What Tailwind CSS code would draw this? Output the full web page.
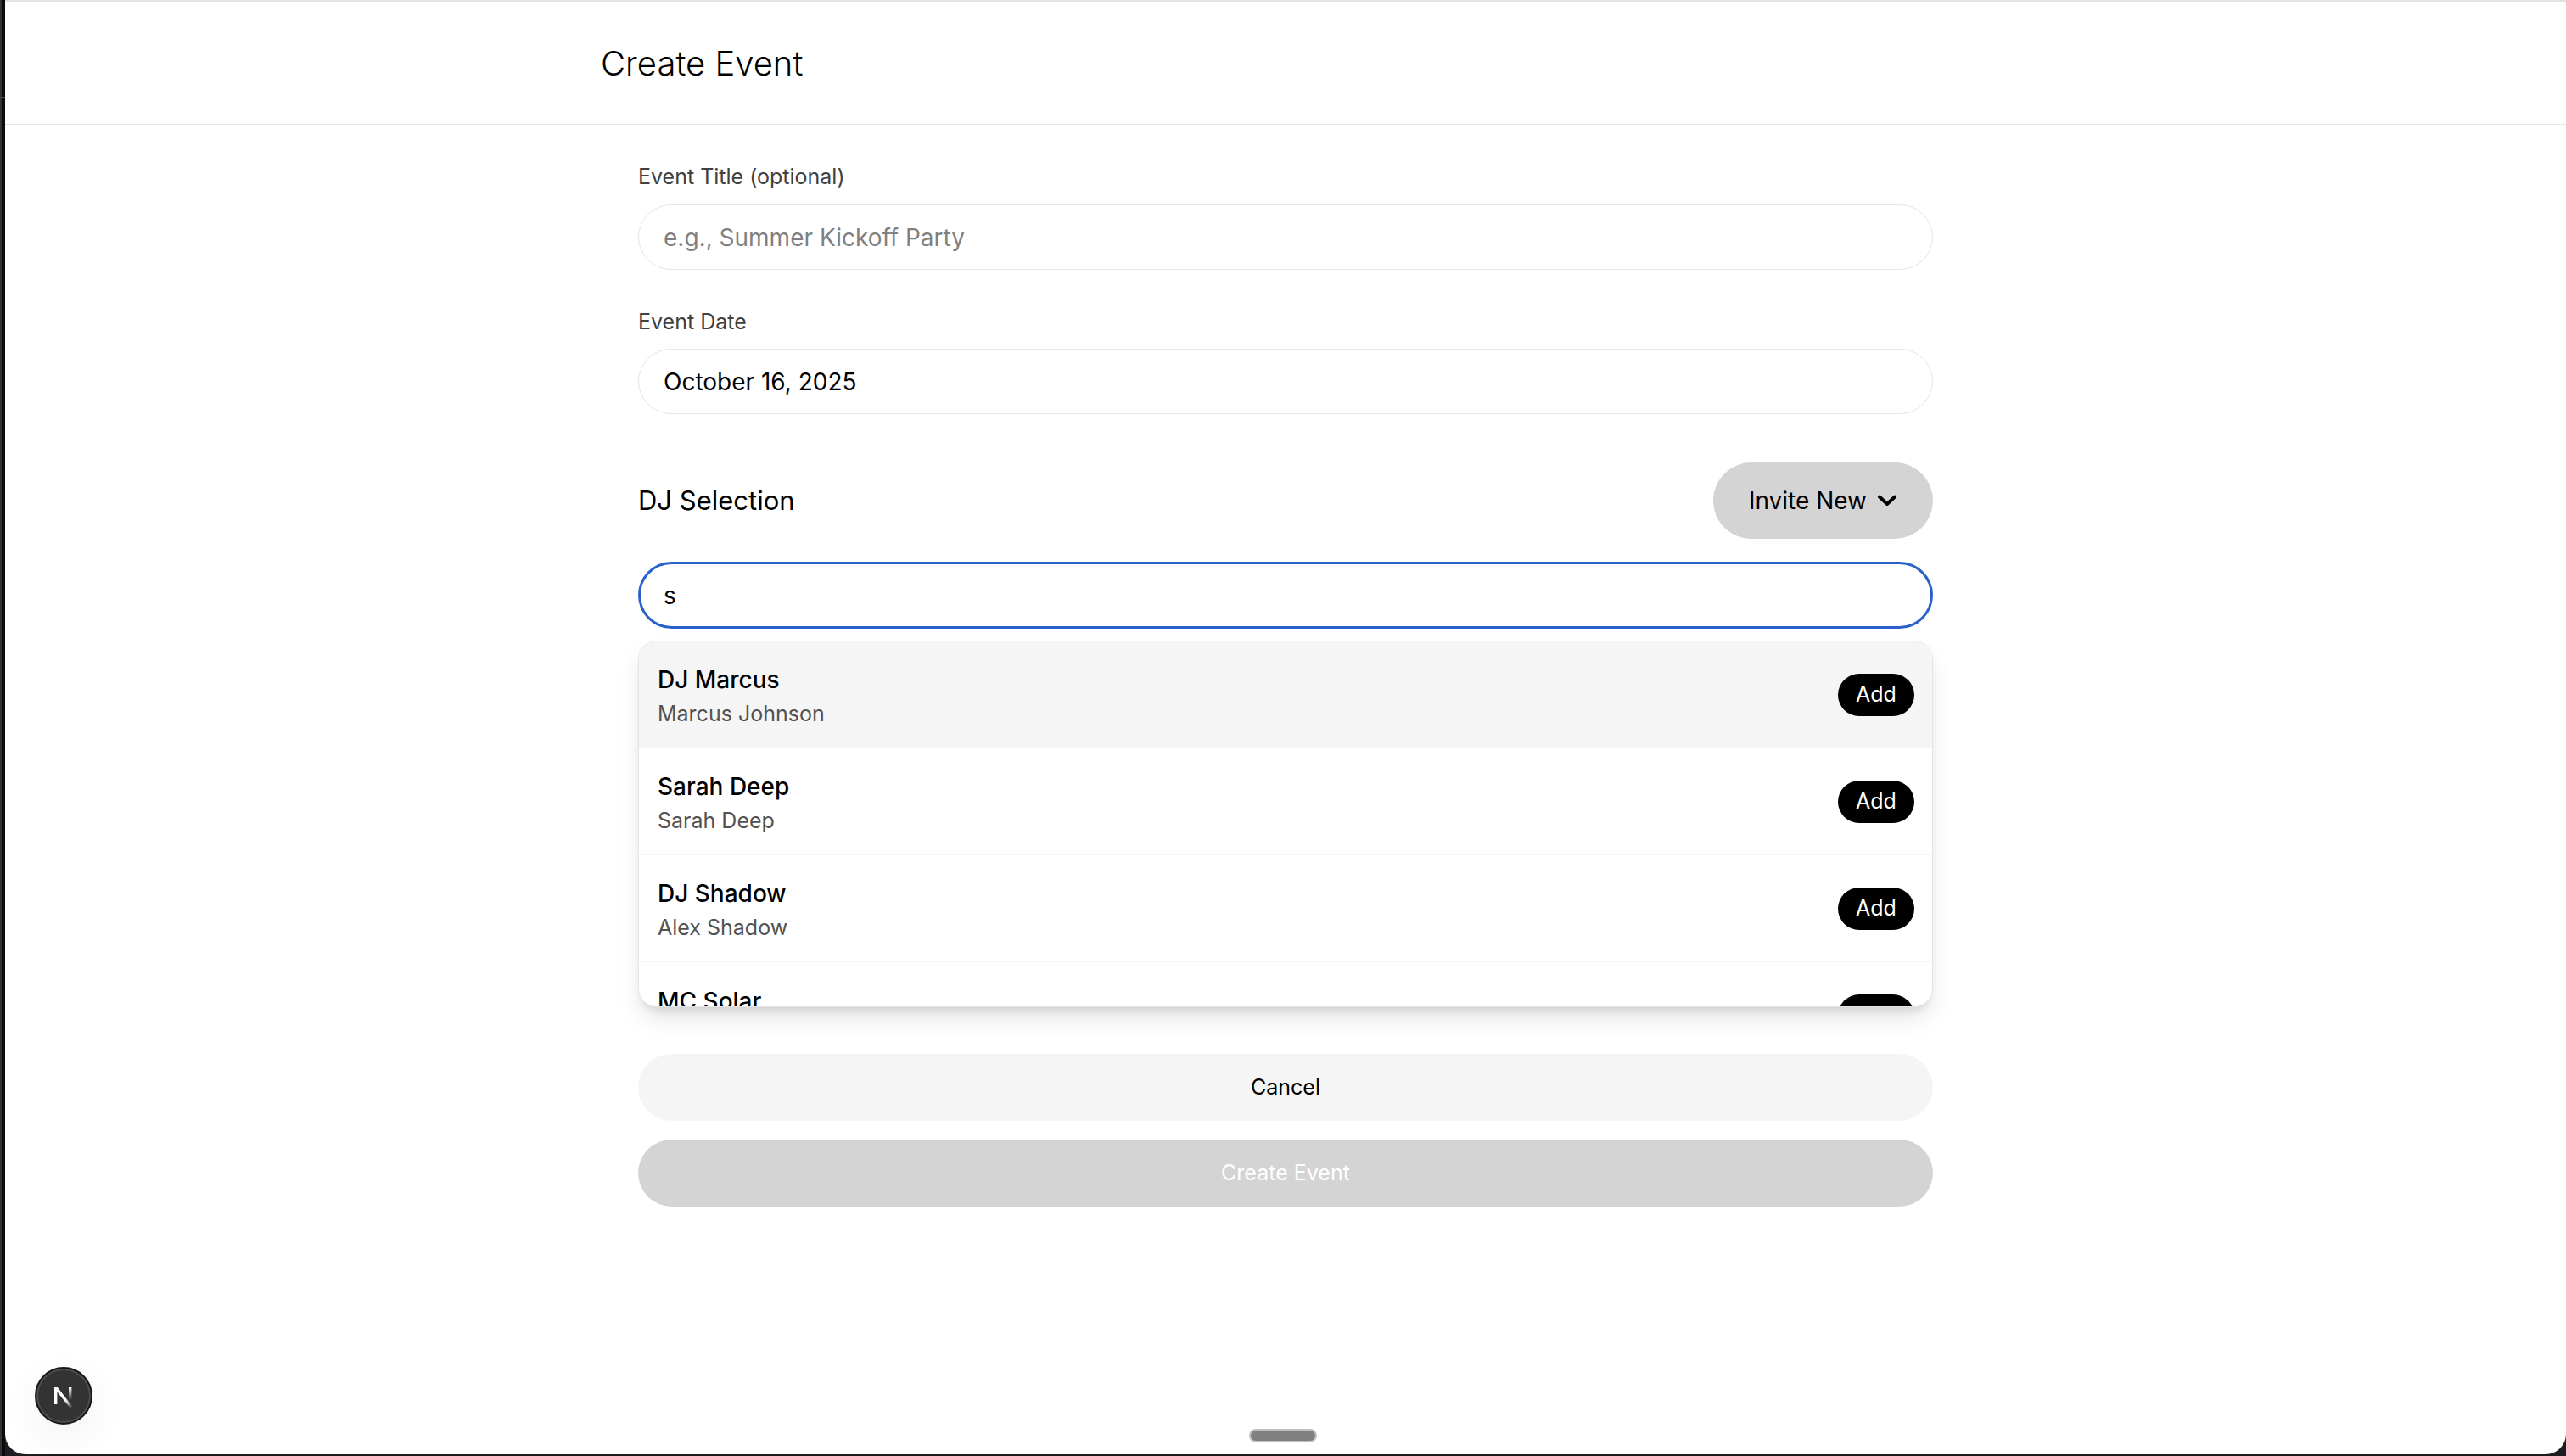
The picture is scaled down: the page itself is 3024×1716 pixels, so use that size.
<!DOCTYPE html>
<html lang="en">
<head>
<meta charset="utf-8">
<title>Create Event</title>
<script src="https://cdn.jsdelivr.net/npm/@tailwindcss/browser@4"></script>
</head>
<body class="relative overflow-hidden bg-[#1c1d20] pl-1.5 pb-0.5 font-['Inter',sans-serif] text-black">
  <div class="absolute inset-y-0 left-0 w-1.5 border-l-2 border-[#303234] bg-[#090b0d]"></div>
  <div class="absolute left-0 top-[114px] h-0.5 w-1.5 bg-[#4a4a4a]"></div>

  <div class="relative flex min-h-[calc(100vh-2px)] flex-col rounded-b-[24px] border-t-2 border-[#e2e2e2] bg-white">
    <header class="border-b border-[#e5e5e5]">
      <div class="mx-auto flex h-36 max-w-[1614px] items-center pt-0.5">
        <h1 class="text-[40px] leading-[56px] font-light">Create Event</h1>
      </div>
    </header>

    <main class="mx-auto w-full max-w-[1526px] pt-[43px]">
      <form>
        <label for="title" class="block text-[25px] leading-9 text-[#404040]">Event Title (optional)</label>
        <input id="title" type="text" placeholder="e.g., Summer Kickoff Party" class="mt-[15px] block h-[77px] w-full rounded-full border border-[#e5e5e5] bg-white px-[29px] text-[28px] placeholder:text-[#808080]">

        <label for="date" class="mt-[43px] block text-[25px] leading-9 text-[#404040]">Event Date</label>
        <input id="date" type="text" value="October 16, 2025" class="mt-3.5 block h-[77px] w-full rounded-full border border-[#e5e5e5] bg-white px-[29px] text-[28px]">

        <div class="mt-[57px] flex items-center justify-between">
          <h2 class="text-[31px] leading-10"><label for="search">DJ Selection</label></h2>
          <button type="button" class="flex h-[90px] items-center gap-3 rounded-full bg-[#d4d4d4] px-[42px] text-[28px]">
            Invite New
            <svg class="h-4 w-6" viewBox="0 0 24 16" fill="none" stroke="currentColor" stroke-width="4" stroke-linecap="round" stroke-linejoin="round"><path d="M3 3.5 12 12 21 3.5"/></svg>
          </button>
        </div>

        <input id="search" type="text" value="s" class="mt-[27px] block h-[79px] w-full rounded-full border-3 border-[#2860cc] bg-white px-[27px] text-[28px]">

        <ul class="mt-3.5 h-[432px] overflow-hidden rounded-[22px] border border-[#e5e5e5] bg-white shadow-[0_16px_30px_-5px_rgba(0,0,0,0.12),0_8px_12px_-6px_rgba(0,0,0,0.12)]">
          <li class="flex h-[126px] items-center justify-between border-b border-[#f5f5f5] bg-[#f5f5f5] pr-[21px] pl-[22px]">
            <div class="pt-[3px]"><p class="text-[28px] leading-[42px] font-medium">DJ Marcus</p><p class="text-[25px] leading-[38px] text-[#525252]">Marcus Johnson</p></div>
            <button type="button" class="h-[50px] w-[90px] rounded-full bg-black text-[25px] text-white">Add</button>
          </li>
          <li class="flex h-[126px] items-center justify-between border-b border-[#f5f5f5] pr-[21px] pl-[22px]">
            <div class="pt-[3px]"><p class="text-[28px] leading-[42px] font-medium">Sarah Deep</p><p class="text-[25px] leading-[38px] text-[#525252]">Sarah Deep</p></div>
            <button type="button" class="h-[50px] w-[90px] rounded-full bg-black text-[25px] text-white">Add</button>
          </li>
          <li class="flex h-[126px] items-center justify-between border-b border-[#f5f5f5] pr-[21px] pl-[22px]">
            <div class="pt-[3px]"><p class="text-[28px] leading-[42px] font-medium">DJ Shadow</p><p class="text-[25px] leading-[38px] text-[#525252]">Alex Shadow</p></div>
            <button type="button" class="h-[50px] w-[90px] rounded-full bg-black text-[25px] text-white">Add</button>
          </li>
          <li class="flex h-[126px] items-center justify-between pr-[21px] pl-[22px]">
            <div class="pt-[3px] pb-[38px]"><p class="text-[28px] leading-[42px] font-medium">MC Solar</p></div>
            <button type="button" class="h-[50px] w-[90px] rounded-full bg-black text-[25px] text-white">Add</button>
          </li>
        </ul>

        <button type="button" class="mt-[55px] block h-[79px] w-full rounded-full bg-[#f5f5f5] text-[25px]">Cancel</button>
        <button type="submit" disabled class="mt-[22px] block h-[79px] w-full rounded-full bg-[#d4d4d4] text-[25px] text-white">Create Event</button>
      </form>
    </main>

    <button type="button" aria-label="Open Next.js Dev Tools" class="absolute bottom-[35px] left-[35px] flex size-[68px] items-center justify-center rounded-full border-2 border-[#171717] bg-[#333] shadow-[inset_0_0_0_2px_#4d4d4d,0_16px_48px_rgba(0,0,0,0.06)]">
      <svg class="size-10" viewBox="0 0 40 40" fill="none">
        <defs>
          <linearGradient id="diag" x1="22" y1="25" x2="29" y2="35" gradientUnits="userSpaceOnUse"><stop stop-color="#fff"/><stop offset="1" stop-color="#fff" stop-opacity="0"/></linearGradient>
          <linearGradient id="stem" x1="28" y1="10" x2="28" y2="25" gradientUnits="userSpaceOnUse"><stop stop-color="#fff"/><stop offset="1" stop-color="#fff" stop-opacity="0"/></linearGradient>
        </defs>
        <path d="M9 10h3.4v20H9z" fill="#fff"/>
        <path d="M9 10h3.8L31 33.5 28.4 35.5 9 11z" fill="url(#diag)"/>
        <path d="M26 10h3.4v15H26z" fill="url(#stem)"/>
      </svg>
    </button>
    <div class="absolute bottom-3.5 left-[1466px] h-4 w-20 rounded-full border-2 border-[#bfbfbf] bg-[#808080]"></div>
  </div>
</body>
</html>
